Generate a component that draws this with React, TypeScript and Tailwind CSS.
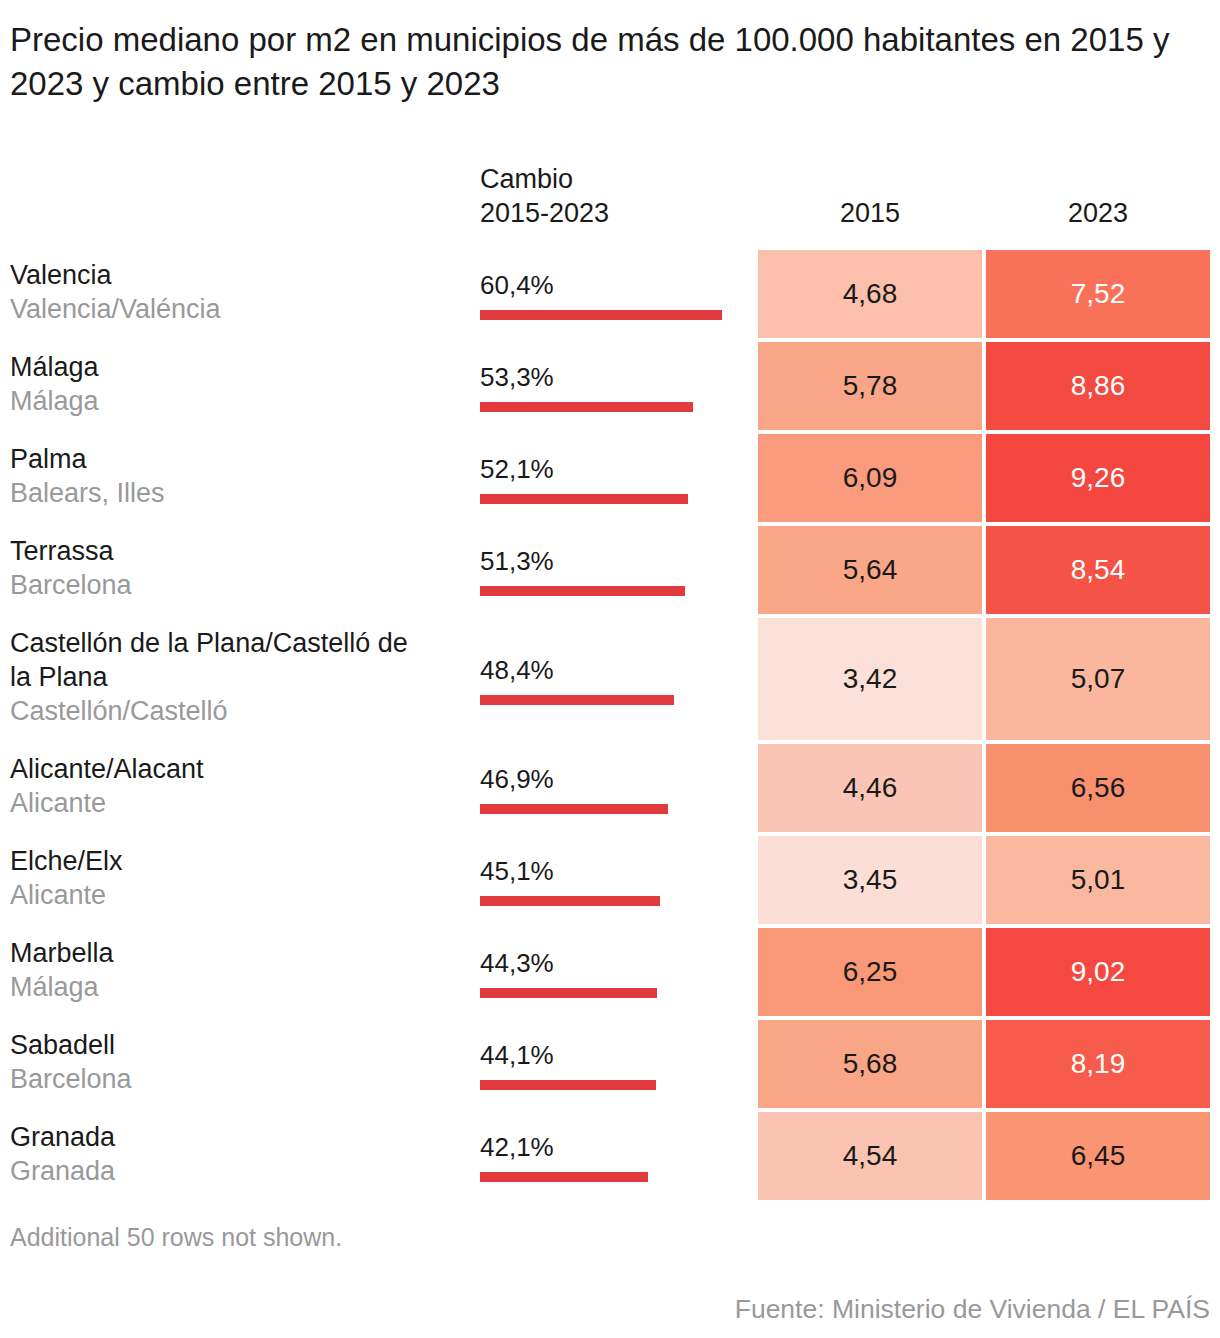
import React from "react";

type Row = {
  name: string;
  region: string;
  change: number;
  v2015: string;
  c2015: string;
  v2023: string;
  c2023: string;
  light?: boolean;
};

const rows: Row[] = [
  { name: "Valencia", region: "Valencia/Valéncia", change: 60.4, v2015: "4,68", c2015: "#fbbfac", v2023: "7,52", c2023: "#f87158", light: true },
  { name: "Málaga", region: "Málaga", change: 53.3, v2015: "5,78", c2015: "#f9a588", v2023: "8,86", c2023: "#f44a41", light: true },
  { name: "Palma", region: "Balears, Illes", change: 52.1, v2015: "6,09", c2015: "#f99b7c", v2023: "9,26", c2023: "#f4473f", light: true },
  { name: "Terrassa", region: "Barcelona", change: 51.3, v2015: "5,64", c2015: "#f9a787", v2023: "8,54", c2023: "#f55347", light: true },
  { name: "Castellón de la Plana/Castelló de la Plana", region: "Castellón/Castelló", change: 48.4, v2015: "3,42", c2015: "#fbe0d8", v2023: "5,07", c2023: "#fbb69e" },
  { name: "Alicante/Alacant", region: "Alicante", change: 46.9, v2015: "4,46", c2015: "#fbc5b5", v2023: "6,56", c2023: "#f8906e" },
  { name: "Elche/Elx", region: "Alicante", change: 45.1, v2015: "3,45", c2015: "#fbdfd6", v2023: "5,01", c2023: "#fbb8a0" },
  { name: "Marbella", region: "Málaga", change: 44.3, v2015: "6,25", c2015: "#f99876", v2023: "9,02", c2023: "#f44841", light: true },
  { name: "Sabadell", region: "Barcelona", change: 44.1, v2015: "5,68", c2015: "#f9a687", v2023: "8,19", c2023: "#f65b4b", light: true },
  { name: "Granada", region: "Granada", change: 42.1, v2015: "4,54", c2015: "#fbc3b1", v2023: "6,45", c2023: "#f99572" },
];

const fmt = (n: number) => n.toFixed(1).replace(".", ",") + "%";

export default function App() {
  return (
    <div
      className="w-[1220px] bg-white px-[10px] pt-[18px] pb-[16px] text-[#1a1a1a]"
      style={{ fontFamily: '"Liberation Sans", Arial, sans-serif' }}
    >
      <h1 className="text-[33px] leading-[44px] font-normal">
        Precio mediano por m2 en municipios de más de 100.000 habitantes en 2015 y 2023 y cambio entre 2015 y 2023
      </h1>

      {/* header */}
      <div className="mt-[56px] grid grid-cols-[466px_274px_224px_224px] gap-x-[4px] items-end text-[27px] leading-[34px]">
        <div />
        <div>
          Cambio
          <br />
          2015-2023
        </div>
        <div className="text-center">2015</div>
        <div className="text-center">2023</div>
      </div>

      {/* rows */}
      <div className="mt-[20px] flex flex-col gap-[4px]">
        {rows.map((r) => (
          <div key={r.name} className="grid grid-cols-[466px_274px_224px_224px] gap-x-[4px]">
            <div className="pt-[8px] pb-[12px] pr-[56px] text-[27px] leading-[34px]">
              <div>{r.name}</div>
              <div className="text-[#999999]">{r.region}</div>
            </div>
            <div className="flex flex-col justify-center">
              <div className="text-[26px] leading-[34px]">{fmt(r.change)}</div>
              <div className="mt-[8px] h-[10px] bg-[#e0393e]" style={{ width: `${r.change * 4}px` }} />
            </div>
            <div
              className="flex items-center justify-center text-[28px] text-[#1a1a1a]"
              style={{ backgroundColor: r.c2015 }}
            >
              {r.v2015}
            </div>
            <div
              className={`flex items-center justify-center text-[28px] ${r.light ? "text-white" : "text-[#1a1a1a]"}`}
              style={{ backgroundColor: r.c2023 }}
            >
              {r.v2023}
            </div>
          </div>
        ))}
      </div>

      <p className="mt-[20px] text-[25px] leading-[34px] text-[#999999]">Additional 50 rows not shown.</p>

      <p className="mt-[38px] text-right text-[26.5px] leading-[34px] text-[#999999]">
        Fuente: Ministerio de Vivienda / EL PAÍS
      </p>
    </div>
  );
}
